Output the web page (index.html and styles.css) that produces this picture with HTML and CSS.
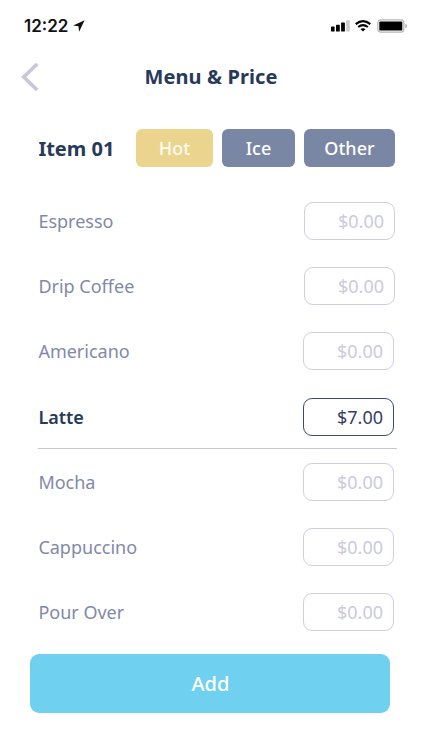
FILE: index.html
```html
<!DOCTYPE html>
<html lang="en">
<head>
    <meta charset="UTF-8">
    <meta name="viewport" content="width=device-width, initial-scale=1.0">
    <title>Menu &amp; Price</title>
    <link rel="stylesheet" href="styles.css">
</head>
<body>
    <div class="screen">
        <div class="status-bar">
            <div class="status-time">
                <span>12:22</span>
                <svg class="location-icon" width="12" height="12" viewBox="0 0 12 12">
                    <path d="M11.6 0.3 L0.2 5.4 L5.5 6.3 L6.1 11.8 Z" fill="#111"/>
                </svg>
            </div>
            <div class="status-icons">
                <svg width="19" height="12" viewBox="0 0 19 12">
                    <rect x="0" y="6.6" width="3.6" height="5" rx="0.7" fill="#000"/>
                    <rect x="5" y="4.8" width="3.8" height="6.8" rx="0.7" fill="#000"/>
                    <rect x="10.1" y="2.4" width="3.8" height="9.2" rx="0.7" fill="#000"/>
                    <rect x="15.2" y="0.2" width="3.6" height="11.4" rx="0.7" fill="#ccc"/>
                </svg>
                <svg class="wifi-icon" width="16" height="12" viewBox="0 0 16 12">
                    <path d="M0.7 4.1 Q8 -1.7 15.3 4.1" fill="none" stroke="#000" stroke-width="2.2"/>
                    <path d="M3.2 7 Q8 3.2 12.8 7" fill="none" stroke="#000" stroke-width="2"/>
                    <path d="M5.4 9.1 Q8 7.2 10.6 9.1 L8 11.6 Z" fill="#000"/>
                </svg>
                <svg class="battery-icon" width="31" height="14" viewBox="0 0 31 14">
                    <rect x="0.8" y="0.8" width="26" height="12.4" rx="3" fill="#fff" stroke="#b5b5b5" stroke-width="1.2"/>
                    <rect x="2.3" y="2.4" width="23" height="9.2" rx="1.2" fill="#000"/>
                    <path d="M28.3 4.8 Q30 5.3 30 7 Q30 8.7 28.3 9.2 Z" fill="#aaa"/>
                </svg>
            </div>
        </div>

        <header class="header">
            <svg class="back-icon" width="18" height="30" viewBox="0 0 18 30">
                <path d="M16.2 2 L2.8 15 L16.2 28" fill="none" stroke="#c8c8da" stroke-width="3.8"/>
            </svg>
            <h1>Menu &amp; Price</h1>
        </header>

        <div class="item-bar">
            <h2>Item 01</h2>
            <button class="tab tab-hot active">Hot</button>
            <button class="tab tab-ice">Ice</button>
            <button class="tab tab-other">Other</button>
        </div>

        <ul class="menu-list">
            <li class="menu-row shifted"><span>Espresso</span><span class="price">$0.00</span></li>
            <li class="menu-row shifted"><span>Drip Coffee</span><span class="price">$0.00</span></li>
            <li class="menu-row"><span>Americano</span><span class="price">$0.00</span></li>
            <li class="menu-row selected"><span class="name">Latte</span><span class="price">$7.00</span></li>
            <li class="menu-row"><span>Mocha</span><span class="price">$0.00</span></li>
            <li class="menu-row"><span>Cappuccino</span><span class="price">$0.00</span></li>
            <li class="menu-row"><span>Pour Over</span><span class="price">$0.00</span></li>
        </ul>

        <button class="add-btn">Add</button>
    </div>
</body>
</html>
```
FILE: styles.css
```css
* {
    margin: 0;
    padding: 0;
    box-sizing: border-box;
}

body {
    font-family: "Noto Sans", sans-serif;
    background: #fff;
    color: #273a5a;
}

.screen {
    width: 422px;
    height: 750px;
    overflow: hidden;
}

.status-bar {
    display: flex;
    justify-content: space-between;
    align-items: center;
    height: 52px;
    padding: 0 14px 0 24px;
}

.status-time {
    display: flex;
    align-items: center;
    font-family: Inter, sans-serif;
    font-size: 17px;
    font-weight: 600;
    color: #111;
}

.location-icon {
    margin-left: 5px;
}

.status-icons {
    display: flex;
    align-items: center;
}

.wifi-icon {
    margin-left: 5px;
}

.battery-icon {
    margin-left: 6px;
}

.header {
    display: grid;
    grid-template-columns: 18px 1fr 18px;
    align-items: center;
    height: 50px;
    padding: 0 21px;
}

h1 {
    padding-bottom: 1px;
    text-align: center;
    font-size: 20px;
    font-weight: 700;
    letter-spacing: 0.1px;
}

.item-bar {
    display: flex;
    align-items: center;
    height: 38px;
    margin-top: 27.4px;
    padding-left: 38.4px;
}

h2 {
    width: 97.6px;
    padding-top: 1px;
    font-size: 20px;
    font-weight: 700;
}

.tab {
    height: 38px;
    margin-right: 9px;
    border: none;
    border-radius: 6px;
    background: #7986a4;
    color: #fff;
    font-family: inherit;
    font-size: 18px;
    font-weight: 500;
}

.tab-hot {
    width: 77px;
}

.tab-ice {
    width: 73px;
}

.tab-other {
    width: 91px;
    margin-right: 0;
}

.tab.active {
    background: #ebd58e;
    color: #fffaf0;
}

.menu-list {
    list-style: none;
    margin-top: 21px;
    padding: 0 25px 0 38.4px;
}

.menu-row {
    display: flex;
    justify-content: space-between;
    align-items: center;
    height: 65.2px;
    padding-top: 1px;
    padding-right: 3px;
    border-bottom: 1px solid transparent;
    font-size: 18px;
    color: #8189aa;
}

.menu-row.shifted {
    padding-right: 2px;
}

.menu-row.selected {
    border-color: #c5c5d8;
    color: #273a5a;
}

.name {
    font-weight: 600;
}

.price {
    width: 91px;
    height: 38px;
    padding-right: 10px;
    border: 1px solid #cfcfe0;
    border-radius: 9px;
    line-height: 36px;
    text-align: right;
    color: #cbcbdc;
}

.selected .price {
    border-color: #3b4c6a;
    color: #33415f;
}

.add-btn {
    display: block;
    width: 360px;
    height: 59.6px;
    margin: 8.8px 0 0 30.4px;
    border: none;
    border-radius: 9px;
    background: #6fd0f0;
    color: #fff;
    font-family: inherit;
    font-size: 20px;
    font-weight: 500;
}
```
